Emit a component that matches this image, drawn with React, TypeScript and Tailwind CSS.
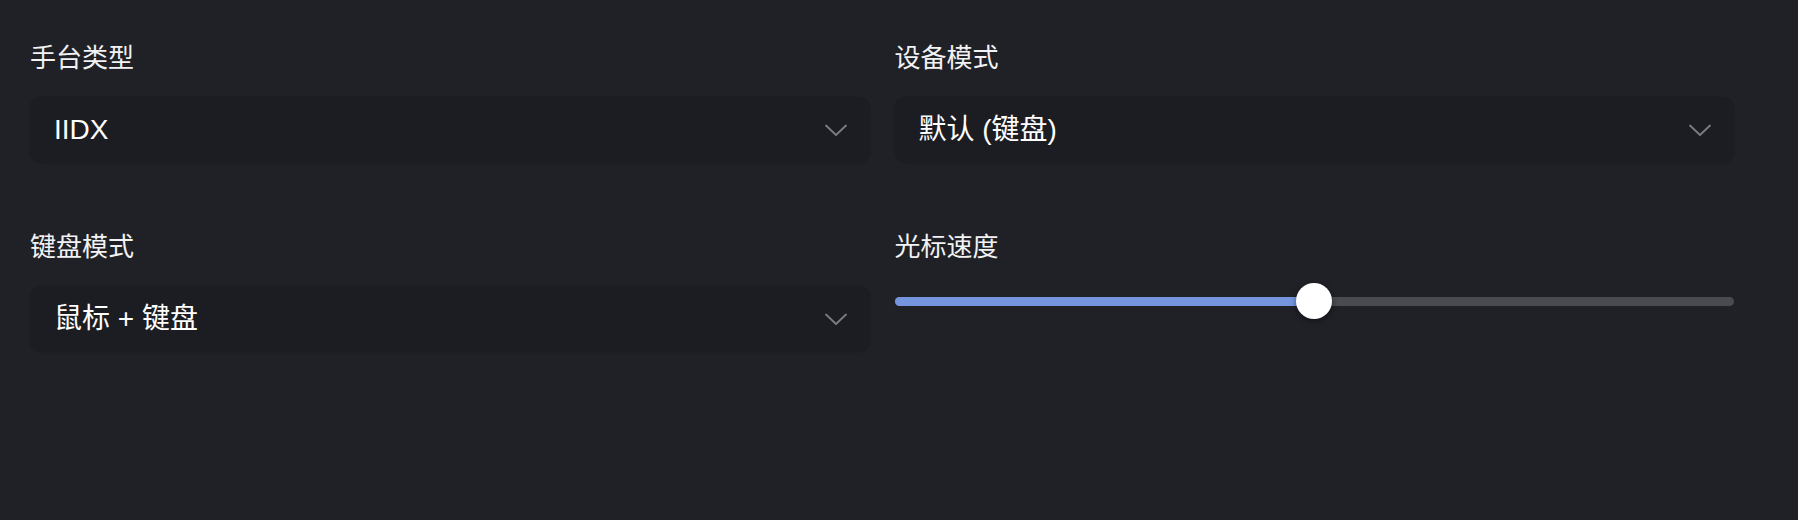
import React, { useState } from "react";

const font = { fontFamily: '"Liberation Sans", "Noto Sans CJK SC", sans-serif' };

const Chevron = () => (
  <svg width="22" height="13" viewBox="0 0 22 13" fill="none" className="shrink-0">
    <path d="M1 1.5 L11 11 L21 1.5" stroke="#7c7d83" strokeWidth="1.8" strokeLinecap="round" strokeLinejoin="round" />
  </svg>
);

const Select = ({ value }: { value: string }) => (
  <button className="flex h-[66px] w-full items-center justify-between rounded-xl bg-[#1c1d22] pl-[24px] pr-[23px] text-left text-[28px] text-white shadow-[0_0_2px_rgba(0,0,0,0.2)]">
    <span>{value}</span>
    <Chevron />
  </button>
);

const Field = ({ label, children }: { label: string; children: React.ReactNode }) => (
  <div className="flex flex-col gap-[21px]">
    <div className="text-[26px] leading-[36px] text-[#f2f2f4]">{label}</div>
    {children}
  </div>
);

const Slider = () => {
  const [value] = useState(50);
  return (
    <div className="relative flex h-[30px] items-center">
      <div className="relative h-[9px] w-full rounded-full bg-[#4a4b50]">
        <div className="absolute left-0 top-0 h-full rounded-full bg-[#7596df]" style={{ width: `${value}%` }} />
        <div
          className="absolute top-1/2 h-[36px] w-[36px] -translate-x-1/2 -translate-y-1/2 rounded-full bg-white shadow-[0_2px_6px_rgba(0,0,0,0.45)]"
          style={{ left: `${value}%` }}
        />
      </div>
    </div>
  );
};

export default function App() {
  return (
    <div className="min-h-[520px] w-full bg-[#202127] pl-[30px] pr-[64px] pt-[40px]" style={font}>
      <div className="grid grid-cols-2 gap-x-[25px] gap-y-[66px]">
        <Field label="手台类型">
          <Select value="IIDX" />
        </Field>
        <Field label="设备模式">
          <Select value="默认 (键盘)" />
        </Field>
        <Field label="键盘模式">
          <Select value="鼠标 + 键盘" />
        </Field>
        <Field label="光标速度">
          <Slider />
        </Field>
      </div>
    </div>
  );
}
